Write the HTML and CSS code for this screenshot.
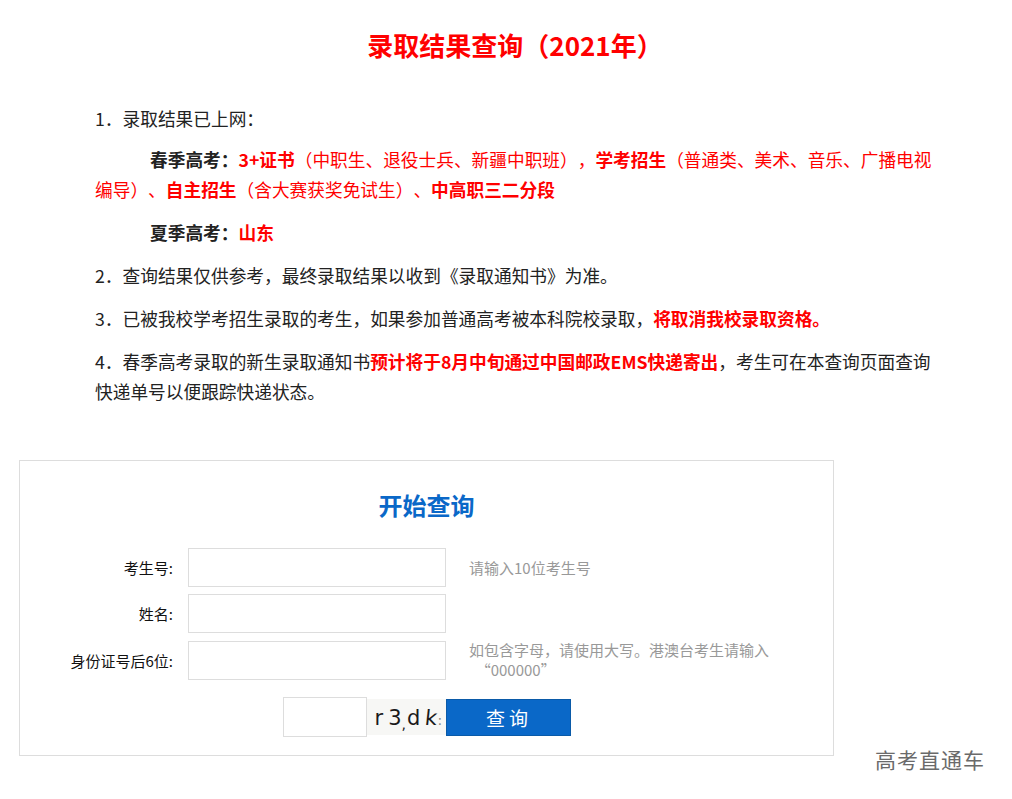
FILE: index.html
```html
<!DOCTYPE html>
<html lang="zh-CN">
<head>
  <meta charset="UTF-8">
  <meta name="viewport" content="width=device-width, initial-scale=1.0">
  <title>录取结果查询（2021年）</title>
  <link rel="stylesheet" href="styles.css">
</head>
<body>

<div class="page">
  <h1 class="title">录取结果查询（2021年）</h1>

  <div class="notes">
    <p class="first">1．录取结果已上网：</p>
    <p class="indent"><b class="dark">春季高考：</b><b>3+证书</b><span class="red">（中职生、退役士兵、新疆中职班），</span><b>学考招生</b><span class="red">（普通类、美术、音乐、广播电视编导）、</span><b>自主招生</b><span class="red">（含大赛获奖免试生）、</span><b>中高职三二分段</b></p>
    <p class="indent"><b class="dark">夏季高考：</b><b>山东</b></p>
    <p>2．查询结果仅供参考，最终录取结果以收到《录取通知书》为准。</p>
    <p>3．已被我校学考招生录取的考生，如果参加普通高考被本科院校录取，<b>将取消我校录取资格。</b></p>
    <p>4．春季高考录取的新生录取通知书<b>预计将于8月中旬通过中国邮政EMS快递寄出</b>，考生可在本查询页面查询快递单号以便跟踪快递状态。</p>
  </div>

  <div class="query-box">
    <h2 class="query-title">开始查询</h2>
    <form class="query-form" onsubmit="return false;">
      <label for="ksh">考生号:</label>
      <input type="text" id="ksh">
      <span class="hint">请输入10位考生号</span>

      <label for="xm">姓名:</label>
      <input type="text" id="xm">
      <span class="hint"></span>

      <label for="sfz">身份证号后6位:</label>
      <input type="text" id="sfz">
      <span class="hint">如包含字母，请使用大写。港澳台考生请输入<br>&nbsp;&nbsp;“000000”</span>
    </form>
    <div class="captcha-row">
      <input type="text" class="captcha-input">
      <div class="captcha"><span>r</span><span class="c2">3</span><span class="c3">,</span><span>d</span><span class="c4">k</span><span class="c5">:</span></div>
      <button type="button" class="btn">查询</button>
    </div>
  </div>
</div>

<div class="watermark">高考直通车</div>

</body>
</html>
```

FILE: styles.css
```css
body {
  margin: 0;
  background-color: #fff;
  font-family: "Noto Sans CJK SC", "Liberation Sans", sans-serif;
  color: #222;
  position: relative;
  height: 799px;
  overflow: hidden;
  text-spacing-trim: space-all;
  font-kerning: none;
  font-feature-settings: "chws" 0, "halt" 0, "palt" 0;
}

.page {
  width: 1012px;
}

.title {
  margin: 0;
  padding: 26px 0 0 18px;
  text-align: center;
  font-size: 26px;
  line-height: 38px;
  color: #f00;
  font-weight: bold;
}

.notes {
  margin: 37px 66px 0 95px;
  font-size: 17.7px;
  line-height: 30px;
}

.notes p {
  margin: 0 0 13px;
}

.notes .first {
  padding-top: 2px;
  margin-bottom: 11px;
}

.notes b {
  color: #f00;
}

.notes .dark {
  color: #222;
}

.notes .red {
  color: #f00;
}

.notes .indent {
  text-indent: 55px;
}

.query-box {
  margin: 54px 0 0 19px;
  width: 813px;
  border: 1px solid #ddd;
  padding: 26px 0 18px;
}

.query-title {
  margin: 0 0 25px;
  text-align: center;
  font-size: 24px;
  line-height: 36px;
  color: #0a68c8;
  font-weight: bold;
}

.query-form {
  display: grid;
  grid-template-columns: 153px 258px 1fr;
  column-gap: 15px;
  row-gap: 7px;
  align-items: center;
  font-size: 15px;
}

.query-form label {
  text-align: right;
  color: #111;
}

.query-form input {
  box-sizing: border-box;
  height: 39px;
  width: 258px;
  border: 1px solid #ddd;
  margin: 0;
}

.hint {
  color: #999;
  margin-left: 8px;
  line-height: 20px;
}

.captcha-row {
  display: flex;
  justify-content: center;
  align-items: center;
  margin-top: 17px;
}

.captcha-input {
  box-sizing: border-box;
  width: 84px;
  height: 40px;
  border: 1px solid #ddd;
  margin: 0;
}

.captcha {
  width: 79px;
  height: 36px;
  background-color: #f7f7f5;
  font-family: "DejaVu Sans", sans-serif;
  font-size: 21px;
  line-height: 38px;
  color: #1a1a1a;
  padding-left: 8px;
  box-sizing: border-box;
  white-space: nowrap;
  overflow: hidden;
}

.captcha span {
  display: inline-block;
  margin-right: 5px;
}

.captcha .c2 {
  margin-right: 0;
}

.captcha .c3 {
  transform: translateY(4px);
  font-size: 14px;
  margin-right: 1px;
}

.captcha .c4 {
  transform: skewX(-6deg);
  margin-right: 0;
}

.captcha .c5 {
  color: #888;
  font-size: 14px;
}

.btn {
  width: 125px;
  height: 37px;
  border: 1px solid #0a5aa8;
  background-color: #0a68c8;
  color: #fff;
  font-family: "Noto Sans CJK SC", sans-serif;
  font-size: 19px;
  letter-spacing: 4px;
  padding-left: 8px;
  cursor: pointer;
}

.watermark {
  position: absolute;
  left: 875px;
  top: 744px;
  font-size: 21px;
  color: #6a6a6a;
  letter-spacing: 1px;
}
```
